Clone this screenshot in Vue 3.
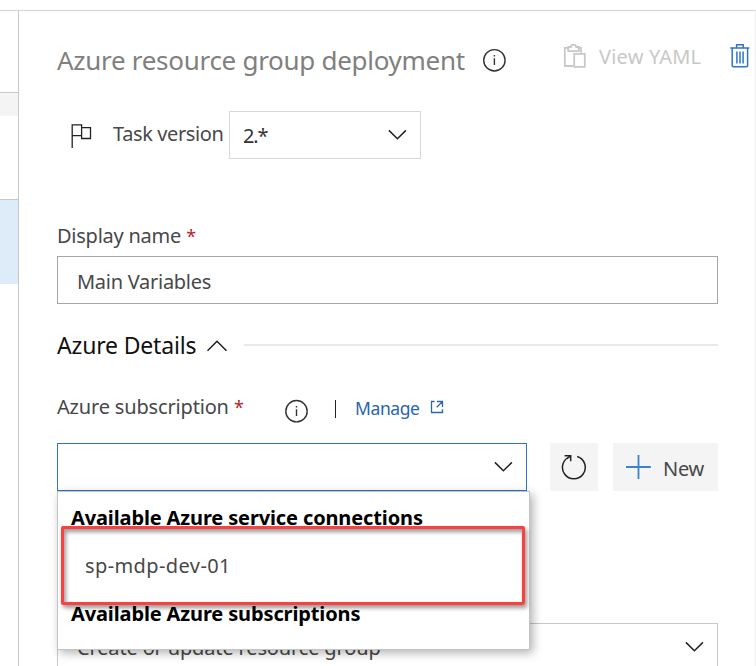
<script setup>
const connections = ['sp-mdp-dev-01']
</script>

<template>
  <div class="page">
    <aside class="rail">
      <div class="rail-top"></div>
      <div class="rail-gap"></div>
      <div class="rail-item"></div>
      <div class="rail-selected"></div>
      <div class="rail-rest"></div>
    </aside>

    <main class="panel">
      <header class="header">
        <h1 class="title">Azure resource group deployment</h1>
        <svg class="info" width="24" height="24" viewBox="0 0 24 24">
          <circle cx="12.4" cy="12.3" r="10.7" />
          <path d="M12.400 10.300v6.700M12.400 7v1.600" />
        </svg>
        <div class="yaml">
          <svg width="24" height="26" viewBox="0 0 24 26">
            <path d="M10 23H1.800V4.800h4.500M14.500 4.800H18v5M5.200 4v4.200h10.600V4h-2.700c-.2-3.300-5-3.300-5.200 0zM11.200 10.800h10.600v13H11.200z" />
          </svg>
          <span class="yaml-text">View YAML</span>
        </div>
        <svg class="trash" width="20" height="26" viewBox="0 0 20 26">
          <path d="M.3 5h19M6.600 4.500v-2.800h6.600v2.800M2.200 5v17.500q0 1.200 1.200 1.200h13q1.200 0 1.200-1.200V5M6.900 8.600v12M10 8.600v12M13.100 8.600v12" />
        </svg>
      </header>

      <section class="version">
        <svg class="flag" width="22" height="26" viewBox="0 0 22 26">
          <path d="M2.200 25V1.900h9.400v10.700H2.200M11.600 4.700h8.900v10.800h-8.900v-3" />
        </svg>
        <label class="version-label">Task version</label>
        <div class="select version-select">
          <span class="version-value">2.*</span>
          <svg class="chevron" width="20" height="12" viewBox="0 0 20 12"><path d="M1.900 1.400l8.500 8.400 8.500-8.400" /></svg>
        </div>
      </section>

      <label class="label name-label"><span class="name-text">Display name</span> <b class="star">*</b></label>
      <div class="input"><span class="input-text">Main Variables</span></div>

      <div class="group">
        <h2 class="group-title">Azure Details</h2>
        <svg class="group-chevron" width="22" height="13" viewBox="0 0 22 13"><path d="M1.500 11.800L11 2.200l9.500 9.600" /></svg>
        <hr class="rule" />
      </div>

      <div class="subscription">
        <label class="label sub-label"><span class="sub-text">Azure subscription</span> <b class="star">*</b></label>
        <svg class="info sub-info" width="24" height="24" viewBox="0 0 24 24">
          <circle cx="12.500" cy="12.200" r="10.700" />
          <path d="M12.500 10.200v6.700M12.500 7v1.600" />
        </svg>
        <i class="bar"></i>
        <a class="manage">Manage</a>
        <svg class="external" width="14" height="14" viewBox="0 0 14 14">
          <path d="M4.500 1.500H1.500v11h11V9.300M7 1.500h5.500V7M12.300 1.700L6.700 7.300" />
        </svg>
      </div>

      <div class="controls">
        <div class="combo">
          <svg class="chevron" width="20" height="12" viewBox="0 0 20 12"><path d="M1.900 1.400l8.500 8.400 8.500-8.400" /></svg>
          <div class="menu">
            <div class="menu-heading first">Available Azure service connections</div>
            <div v-for="name in connections" :key="name" class="option">{{ name }}</div>
            <div class="menu-heading second">Available Azure subscriptions</div>
            <div class="highlight"></div>
          </div>
        </div>
        <button class="button refresh">
          <svg width="26" height="28" viewBox="0 0 26 28">
            <path d="M16.200 3.500A11.400 11.400 0 1 1 9.200 3.600M3.600 2.700h6.100v5.600M9.700 2.700L6 5.800" />
          </svg>
        </button>
        <button class="button new">
          <svg width="26" height="26" viewBox="0 0 26 26"><path d="M13.500 1v24M1 13h24.800" /></svg>
          <span class="new-text">New</span>
        </button>
      </div>

      <div class="action">
        <span class="action-text">Create or update resource group</span>
        <svg class="chevron" width="20" height="12" viewBox="0 0 20 12"><path d="M1.900 1.400l8.500 8.400 8.500-8.400" /></svg>
      </div>
    </main>
  </div>
</template>

<style>
body {
  background: #fff;
  overflow: hidden;
}
</style>

<style scoped>
* {
  box-sizing: border-box;
}
.page {
  width: 756px;
  height: 666px;
  padding-top: 10px;
  display: flex;
  overflow: hidden;
  background: #fff;
  font: 20px/28px "Noto Sans", "Open Sans", sans-serif;
  color: #484848;
}
svg {
  display: block;
  flex: none;
  fill: none;
}
span, h1, h2, a, .menu-heading, .option, .version-label {
  white-space: nowrap;
}
.rail {
  width: 19px;
  flex: none;
  border-top: 1px solid #d6d6d6;
  border-right: 1px solid #c8c8c8;
  display: flex;
  flex-direction: column;
}
.rail-top { height: 81px; }
.rail-gap { height: 24px; background: #f4f4f4; border-top: 1px solid #c8c8c8; }
.rail-item { height: 83px; }
.rail-selected { height: 85px; background: #deebf9; border-top: 1px solid #c8c8c8; }
.panel {
  width: 737px;
  height: 656px;
  padding-left: 38px;
  border-top: 1px solid #d6d6d6;
  border-right: 1px solid #eee;
}
.header {
  height: 100px;
  padding-top: 30px;
  display: flex;
  align-items: flex-start;
}
.title {
  margin: 0;
  width: 425px;
  font-size: 26px;
  line-height: 38px;
  font-weight: 400;
  color: #808080;
  letter-spacing: -0.29px;
}
.info {
  margin-top: 7px;
  stroke: #333;
  stroke-width: 1.4;
}
.yaml {
  width: 167px;
  margin-left: 57px;
  display: flex;
  color: #c8c8c8;
}
.yaml svg {
  margin-top: 2px;
  stroke: #c8c8c8;
  stroke-width: 1.8;
}
.yaml-text {
  margin: 2px 0 0 12px;
  letter-spacing: 0.2px;
}
.trash {
  margin-top: 2px;
  stroke: #2b76cc;
  stroke-width: 1.5;
}
.version {
  height: 114px;
  padding-left: 13px;
  display: flex;
}
.flag {
  margin-top: 12px;
  stroke: #222;
  stroke-width: 1.3;
}
.version-label {
  width: 116px;
  margin: 9px 0 0 20px;
  padding-left: 1px;
  letter-spacing: -0.38px;
}
.select {
  width: 192px;
  height: 48px;
  margin-left: 1px;
  padding: 0 13px;
  border: 1px solid #d8d8d8;
  display: flex;
  align-items: center;
  justify-content: space-between;
}
.version-value {
  padding-top: 2px;
  color: #333;
  letter-spacing: -1.1px;
}
.chevron {
  stroke: #222;
  stroke-width: 1.5;
}
.label {
  display: block;
}
.name-label {
  height: 31px;
  line-height: 26px;
  margin-top: -2px;
}
.name-text {
  letter-spacing: -0.25px;
}
.star {
  font-weight: 400;
  font-size: 18px;
  line-height: 1;
  color: #b8262b;
}
.input {
  width: 661px;
  height: 48px;
  margin-top: 2px;
  padding: 11px 19px;
  border: 1px solid #a6a6a6;
}
.input-text {
  letter-spacing: -0.27px;
}
.group {
  height: 76px;
  width: 661px;
  padding-top: 24px;
  display: flex;
  align-items: flex-start;
}
.group-title {
  margin: 0;
  width: 149px;
  font-size: 23px;
  line-height: 34px;
  font-weight: 400;
  color: #111;
  letter-spacing: -0.17px;
}
.group-chevron {
  margin-top: 11px;
  stroke: #222;
  stroke-width: 1.5;
}
.rule {
  flex: 1;
  height: 2px;
  margin: 16px 0 0 16px;
  border: 0;
  background: #e9e9e9;
}
.subscription {
  height: 63px;
  display: flex;
}
.sub-label {
  width: 227px;
  margin-top: 13px;
}
.sub-text {
  letter-spacing: -0.17px;
}
.sub-info {
  margin-top: 19px;
}
.bar {
  width: 1px;
  height: 18px;
  margin: 20px 19px 0 27px;
  background: #222;
}
.manage {
  width: 75px;
  margin-top: 14px;
  font-size: 17.5px;
  letter-spacing: -0.4px;
  color: #2966ad;
}
.external {
  margin-top: 20px;
  stroke: #2966ad;
  stroke-width: 1.3;
}
.controls {
  display: flex;
}
.combo {
  position: relative;
  width: 470px;
  height: 48px;
  padding-right: 13px;
  border: 1px solid #2b76cc;
  display: flex;
  align-items: center;
  justify-content: flex-end;
}
.button {
  height: 48px;
  padding: 0;
  border: 0;
  background: #f4f4f4;
  color: #484848;
  font: inherit;
  display: flex;
  align-items: center;
}
.refresh {
  width: 48px;
  margin-left: 23px;
  justify-content: center;
}
.refresh svg {
  stroke: #222;
  stroke-width: 1.5;
}
.new {
  width: 105px;
  margin-left: 15px;
  padding-left: 12px;
}
.new svg {
  stroke: #3b82d0;
  stroke-width: 1.8;
}
.new-text {
  margin: 4px 0 0 12px;
  letter-spacing: -0.3px;
}
.menu {
  position: absolute;
  z-index: 2;
  left: -1px;
  top: 47px;
  width: 473px;
  height: 159px;
  padding: 12px 13px 0;
  border: 1px solid #c4c4c4;
  background: #fff;
  box-shadow: 3px 3px 9px rgba(0, 0, 0, 0.3);
}
.menu-heading {
  font-weight: 700;
  color: #000;
  letter-spacing: -0.13px;
}
.option {
  height: 48px;
  line-height: 48px;
  margin: 10px 0;
  padding-left: 14px;
  letter-spacing: 0.4px;
}
.highlight {
  position: absolute;
  left: 3px;
  top: 34px;
  width: 464px;
  height: 79px;
  border: 3px solid #fb4040;
  border-radius: 2px;
  box-shadow: 2px 3px 4px rgba(0, 0, 0, 0.4), inset 2px 3px 4px rgba(0, 0, 0, 0.4);
}
.action {
  width: 661px;
  height: 48px;
  margin-top: 132px;
  padding: 0 13px 0 19px;
  border: 1px solid #c8c8c8;
  display: flex;
  align-items: center;
  justify-content: space-between;
}
.action-text {
  padding-top: 2px;
  letter-spacing: -0.15px;
}
</style>
